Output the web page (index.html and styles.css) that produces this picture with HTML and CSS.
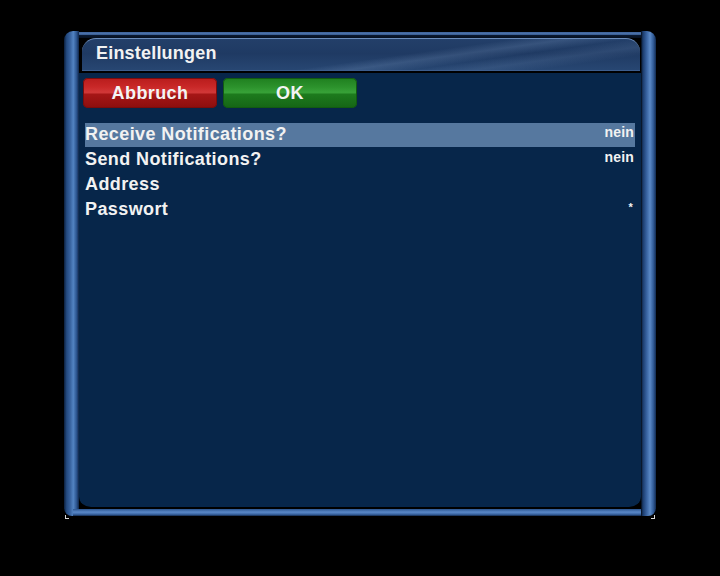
FILE: index.html
```html
<!DOCTYPE html>
<html>
<head>
<meta charset="utf-8">
<link rel="stylesheet" href="styles.css">
</head>
<body>
<div class="frame">
  <div class="pillar pillar-left"></div>
  <div class="topline"></div>
  <div class="titlebar"><span class="title">Einstellungen</span></div>
  <div class="content">
    <div class="buttons">
      <div class="btn btn-red">Abbruch</div>
      <div class="btn btn-green">OK</div>
    </div>
    <div class="list">
      <div class="row selected"><span class="label">Receive Notifications?</span><span class="value">nein</span></div>
      <div class="row"><span class="label">Send Notifications?</span><span class="value">nein</span></div>
      <div class="row"><span class="label">Address</span><span class="value"></span></div>
      <div class="row"><span class="label">Passwort</span><span class="value star">*</span></div>
    </div>
  </div>
  <div class="bottomline"></div>
  <div class="pillar pillar-right"></div>
</div>
</body>
</html>
```
FILE: styles.css
```css
html, body {
  margin: 0;
  padding: 0;
  background: #000;
  width: 720px;
  height: 576px;
  overflow: hidden;
  font-family: "Liberation Sans", Arial, sans-serif;
}

.frame {
  position: relative;
  display: grid;
  grid-template-columns: 15px 562px 15px;
  grid-template-rows: 7px 35px 436px 7px;
  width: 592px;
  margin: 31px 0 0 64px;
}

.frame::before,
.frame::after {
  content: "";
  position: absolute;
  bottom: -3px;
  width: 3px;
  height: 3px;
  border-left: 1px solid #d8d8d8;
  border-bottom: 1px solid #d8d8d8;
}
.frame::before { left: 1px; }
.frame::after { right: 1px; transform: scaleX(-1); }

.pillar {
  grid-row: 1 / 5;
}
.pillar-left {
  grid-column: 1;
  border-radius: 9px 0 0 8px;
  background: linear-gradient(to right, #0b1f3d 0%, #244a80 18%, #36609c 40%, #5283c2 62%, #2a528c 85%, #0e2446 100%);
}
.pillar-right {
  grid-column: 3;
  grid-row: 1 / 5;
  border-radius: 0 9px 8px 0;
  background: linear-gradient(to right, #030a14 0%, #1a3a6a 12%, #355f9c 35%, #5b89c6 60%, #325c98 82%, #112a50 100%);
}

.topline {
  grid-column: 2;
  grid-row: 1;
  background: linear-gradient(to bottom, #000 0px, #000 1px, #3e6298 1px, #4d74ad 3px, #2a4d80 4px, #0a1a33 4px, #050f1f 7px);
}

.titlebar {
  grid-column: 2;
  grid-row: 2;
  display: flex;
  align-items: center;
  margin: 0 1px 0 3px;
  padding: 0 0 4px 14px;
  border-radius: 14px 14px 0 0;
  border-top: 1px solid #6a8cbc;
  border-bottom: 2px solid #000;
  box-shadow: inset 0 -1px 0 #3d5e8e;
  background:
    linear-gradient(172deg, rgba(255,255,255,0) 55%, rgba(150,180,220,0.18) 62%, rgba(255,255,255,0) 70%, rgba(150,180,220,0.12) 78%, rgba(255,255,255,0) 86%),
    linear-gradient(to bottom, #233f69 0%, #1f3a63 45%, #284773 100%);
}

.title {
  color: #f2f2f2;
  font-size: 18px;
  font-weight: bold;
  letter-spacing: 0.2px;
}

.content {
  grid-column: 2;
  grid-row: 3;
  background: #07264a;
  border-radius: 0 0 12px 12px;
  border-bottom: 2px solid #000;
  padding: 5px 0 0 4px;
  box-sizing: border-box;
}

.bottomline {
  grid-column: 2;
  grid-row: 4;
  background: linear-gradient(to bottom, #2b5590 0%, #5a88c8 45%, #3a66a4 75%, #11284c 100%);
  margin: 0 -6px;
}

.buttons {
  display: flex;
  gap: 6px;
}

.btn {
  width: 134px;
  height: 30px;
  box-sizing: border-box;
  border-radius: 5px;
  display: flex;
  align-items: center;
  justify-content: center;
  color: #f4f4f4;
  font-size: 18px;
  font-weight: bold;
  letter-spacing: 0.4px;
}

.btn-red {
  background: linear-gradient(to bottom, #b81c1c 0%, #c92828 30%, #d23838 48%, #a51616 55%, #8c0e0e 100%);
  box-shadow: inset 0 0 0 1px #7a0c0c;
}

.btn-green {
  background: linear-gradient(to bottom, #1f7f1f 0%, #2c922c 30%, #38a238 48%, #1d7a1d 55%, #156515 100%);
  box-shadow: inset 0 0 0 1px #125a12;
}

.list {
  margin: 15px 0 0 2px;
  width: 550px;
  display: flex;
  flex-direction: column;
}

.row {
  height: 25px;
  flex: none;
  display: flex;
  align-items: center;
  justify-content: space-between;
  color: #f2f2f2;
}

.row.selected {
  background: #56789f;
  height: 24px;
  margin-bottom: 1px;
}

.label {
  font-size: 18px;
  line-height: 20px;
  font-weight: bold;
  letter-spacing: 0.4px;
  margin-top: -3px;
}

.value {
  font-size: 14px;
  line-height: 16px;
  font-weight: bold;
  letter-spacing: 0.2px;
  padding-right: 1px;
  margin-top: -7px;
}

.value.star {
  font-size: 11px;
  padding-right: 2px;
  margin-top: -8px;
}
```
